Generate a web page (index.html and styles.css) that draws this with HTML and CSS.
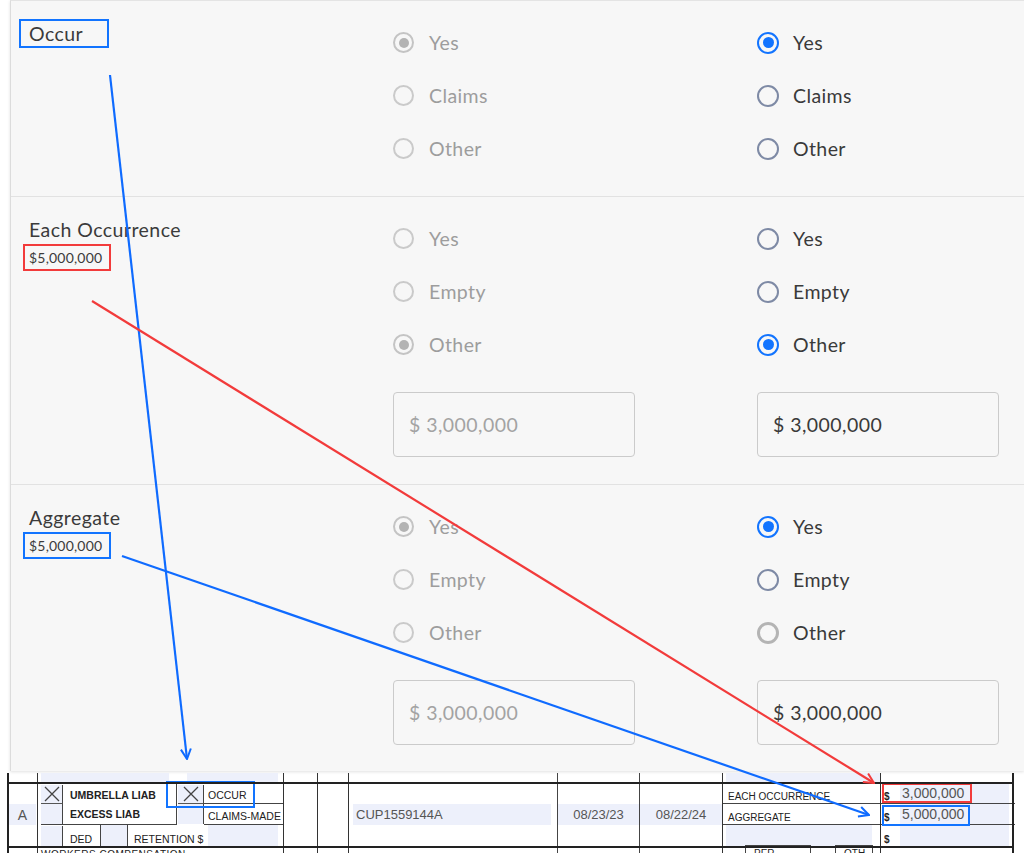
FILE: index.html
```html
<!DOCTYPE html>
<html lang="en">
<head>
  <meta charset="UTF-8" />
  <title>Umbrella coverage review</title>
  <link rel="stylesheet" href="styles.css">
</head>
<body>
<div class="page">

  <div class="panel">
    <section class="field">
      <div class="field-label">
        <div class="field-name"><span class="mark mark-blue name-mark">Occur</span></div>
      </div>
      <div class="choices muted">
        <div class="opt"><span class="dot on"></span>Yes</div>
        <div class="opt"><span class="dot"></span>Claims</div>
        <div class="opt"><span class="dot"></span>Other</div>
      </div>
      <div class="choices">
        <div class="opt"><span class="dot on"></span>Yes</div>
        <div class="opt"><span class="dot"></span>Claims</div>
        <div class="opt"><span class="dot"></span>Other</div>
      </div>
    </section>

    <section class="field has-amount">
      <div class="field-label">
        <div class="field-name">Each Occurrence</div>
        <div class="field-value"><span class="mark mark-red">$5,000,000</span></div>
      </div>
      <div class="choices muted">
        <div class="opt"><span class="dot"></span>Yes</div>
        <div class="opt"><span class="dot"></span>Empty</div>
        <div class="opt"><span class="dot on"></span>Other</div>
        <div class="amount">$ 3,000,000</div>
      </div>
      <div class="choices">
        <div class="opt"><span class="dot"></span>Yes</div>
        <div class="opt"><span class="dot"></span>Empty</div>
        <div class="opt"><span class="dot on"></span>Other</div>
        <div class="amount">$ 3,000,000</div>
      </div>
    </section>

    <section class="field has-amount">
      <div class="field-label">
        <div class="field-name">Aggregate</div>
        <div class="field-value"><span class="mark mark-blue">$5,000,000</span></div>
      </div>
      <div class="choices muted">
        <div class="opt"><span class="dot on"></span>Yes</div>
        <div class="opt"><span class="dot"></span>Empty</div>
        <div class="opt"><span class="dot"></span>Other</div>
        <div class="amount">$ 3,000,000</div>
      </div>
      <div class="choices">
        <div class="opt"><span class="dot on"></span>Yes</div>
        <div class="opt"><span class="dot"></span>Empty</div>
        <div class="opt"><span class="dot hover"></span>Other</div>
        <div class="amount">$ 3,000,000</div>
      </div>
    </section>
  </div>

  <!-- piece of the certificate the values came from -->
  <div class="acord">
    <div class="strip-a fill"></div>
    <div class="strip-b fill"></div>
    <div class="strip-c fill"></div>

    <div class="ltr fill">A</div>

    <div class="chk chk-1 fill">
      <svg viewBox="0 0 20 16"><path d="M3 1 L17 15 M17 1 L3 15" /></svg>
    </div>
    <div class="chk-blank chk-1b fill"></div>
    <div class="chk-blank chk-1c fill"></div>

    <div class="kind kind-1">UMBRELLA LIAB</div>
    <div class="kind kind-2">EXCESS LIAB</div>

    <div class="chk chk-2 fill">
      <svg viewBox="0 0 20 16"><path d="M3 1 L17 15 M17 1 L3 15" /></svg>
    </div>
    <div class="chk-blank chk-2b fill"></div>

    <div class="basis basis-1">OCCUR</div>
    <div class="basis basis-2">CLAIMS-MADE</div>

    <div class="ded">
      <span class="ded-lbl">DED</span>
      <span class="ded-box fill"></span>
      <span class="ret-lbl">RETENTION $</span>
      <span class="ret-box fill"></span>
    </div>

    <div class="policy fill">CUP1559144A</div>
    <div class="date date-eff fill">08/23/23</div>
    <div class="date date-exp fill">08/22/24</div>

    <div class="limit limit-1">EACH OCCURRENCE</div>
    <div class="limit limit-2">AGGREGATE</div>
    <div class="limit-3 fill"></div>

    <div class="amt amt-1"><b>$</b><span class="fill">3,000,000</span></div>
    <div class="amt amt-2"><b>$</b><span class="fill">5,000,000</span></div>
    <div class="amt amt-3"><b>$</b><span class="fill"></span></div>

    <div class="workers">WORKERS COMPENSATION</div>
    <div class="per-oth"><span>PER</span><span>OTH-</span></div>

    <span class="note note-occur"></span>
    <span class="note note-each"></span>
    <span class="note note-agg"></span>
  </div>

  <svg class="arrows" width="1024" height="853" viewBox="0 0 1024 853">
    <defs>
      <marker id="head-blue" viewBox="0 0 12 12" refX="11" refY="6" markerWidth="12" markerHeight="12" markerUnits="userSpaceOnUse" orient="auto">
        <path d="M1 1 L11 6 L1 11" fill="none" stroke="#0f6bff" stroke-width="2" />
      </marker>
      <marker id="head-red" viewBox="0 0 12 12" refX="11" refY="6" markerWidth="12" markerHeight="12" markerUnits="userSpaceOnUse" orient="auto">
        <path d="M1 1 L11 6 L1 11" fill="none" stroke="#f23b3b" stroke-width="2" />
      </marker>
    </defs>
    <line x1="110" y1="75" x2="187" y2="759" stroke="#0f6bff" stroke-width="2.2" marker-end="url(#head-blue)" />
    <line x1="92" y1="301" x2="874" y2="783" stroke="#f23b3b" stroke-width="2.2" marker-end="url(#head-red)" />
    <line x1="122" y1="556" x2="869" y2="815" stroke="#0f6bff" stroke-width="2.2" marker-end="url(#head-blue)" />
  </svg>

</div>
</body>
</html>
```

FILE: styles.css
```css
body {
  margin: 0;
  background: #fff;
  font-family: Lato, 'Open Sans', sans-serif;
  color: #3b3b3b;
}

.page {
  position: relative;
  width: 1024px;
  height: 853px;
  overflow: hidden;
}

/* review panel */

.panel {
  margin-left: 10px;
  background: #f7f7f7;
  border-left: 1px solid #dcdcdc;
  border-top: 1px solid #e4e4e4;
  box-shadow: 0 1px 3px rgba(0, 0, 0, 0.12);
}

.field {
  display: grid;
  grid-template-columns: 382px 364px 1fr;
  padding: 15px 0 21px;
  border-bottom: 1px solid #e2e2e2;
}

.field.has-amount {
  padding-bottom: 27px;
}

.field:last-child {
  border-bottom: none;
  padding-bottom: 26px;
}

.field-label {
  padding-left: 18px;
}

.field-name {
  margin-top: 6px;
  font-size: 19.5px;
  letter-spacing: 0.45px;
  line-height: 24px;
}

.field-value {
  margin-top: 6px;
  font-size: 14px;
  letter-spacing: 0.2px;
  line-height: 20px;
}

.mark {
  border: 2px solid;
  padding: 3px 7px 3px 4px;
  margin-left: -6px;
}

.mark-blue { border-color: #1274ff; }
.mark-red { border-color: #f23b3b; }

.name-mark {
  padding: 1px 24px 1px 8px;
  margin-left: -10px;
}

.opt {
  display: flex;
  align-items: center;
  gap: 14px;
  height: 53px;
  font-size: 19.5px;
  letter-spacing: 0.4px;
  color: #3a3a3a;
}

.dot {
  width: 22px;
  height: 22px;
  box-sizing: border-box;
  border: 2px solid #7e8aa5;
  border-radius: 50%;
  display: grid;
  place-items: center;
}

.dot.on {
  border: 2.5px solid #1274ff;
}

.dot.on::after {
  content: '';
  width: 11px;
  height: 11px;
  border-radius: 50%;
  background: #1274ff;
}

.dot.hover {
  border: 3.5px solid #b4b4b4;
}

.muted .opt { color: #9d9d9d; gap: 15px; }
.muted .dot { border-color: #cacaca; width: 21px; height: 21px; }
.muted .dot.on { border: 2px solid #c4c4c4; }
.muted .dot.on::after { background: #b3b3b3; width: 10px; height: 10px; }

.amount {
  margin-top: 21px;
  width: 242px;
  height: 65px;
  box-sizing: border-box;
  border: 1px solid #cbcbcb;
  border-radius: 4px;
  padding-left: 15px;
  display: flex;
  align-items: center;
  font-size: 19.5px;
  letter-spacing: 0.45px;
  color: #3a3a3a;
}

.muted .amount { color: #a3a3a3; }

/* certificate excerpt */

.acord {
  position: relative;
  margin: 2px 0 0 7px;
  width: 1008px;
  height: 82px;
  display: grid;
  grid-template-columns: 30px 26px 114px 27px 79px 34px 31px 209px 82px 83px 158px 135px;
  grid-template-rows: 9px 22px 21px 21px 9px;
  font-family: 'Liberation Sans', Arial, sans-serif;
  color: #222;
}

.acord::after {
  content: '';
  position: absolute;
  inset: 0;
  pointer-events: none;
  background:
    linear-gradient(#222, #222) 0 0 / 2px 100% no-repeat,
    linear-gradient(#222, #222) 1005px 0 / 2px 100% no-repeat,
    linear-gradient(#222, #222) 0 9px / 1007px 2px no-repeat,
    linear-gradient(#222, #222) 0 73px / 1007px 2px no-repeat,
    linear-gradient(#333, #333) 30px 0 / 1px 100% no-repeat,
    linear-gradient(#333, #333) 276px 0 / 1px 100% no-repeat,
    linear-gradient(#333, #333) 310px 0 / 1px 100% no-repeat,
    linear-gradient(#333, #333) 341px 0 / 1px 100% no-repeat,
    linear-gradient(#444, #444) 550px 0 / 1px 100% no-repeat,
    linear-gradient(#444, #444) 632px 0 / 1px 100% no-repeat,
    linear-gradient(#333, #333) 715px 0 / 1px 100% no-repeat,
    linear-gradient(#333, #333) 873px 0 / 1px 100% no-repeat;
}

.fill { background: #edf0fb; }

.strip-a { grid-column: 2 / 4; grid-row: 1; margin: 0 8px 0 4px; }
.strip-b { grid-column: 4 / 6; grid-row: 1; margin: 0 5px 0 10px; }
.strip-c { grid-column: 11; grid-row: 1; margin-left: 4px; }

.ltr {
  grid-column: 1;
  grid-row: 3;
  margin: 0 1px 0 2px;
  display: flex;
  align-items: center;
  justify-content: center;
  font-size: 14px;
  color: #555;
}

.chk {
  display: flex;
  align-items: center;
  justify-content: center;
  border-bottom: 1px solid #555;
  border-right: 1px solid #444;
  margin: 3px 0 0 4px;
}

.chk svg {
  width: 20px;
  height: 16px;
}

.chk path {
  stroke: #444;
  stroke-width: 1.3;
  fill: none;
}

.chk-1 { grid-column: 2; grid-row: 2; }
.chk-2 { grid-column: 4; grid-row: 2; margin-left: 1px; }

.chk-blank {
  border-right: 1px solid #444;
  margin-left: 4px;
}

.chk-1b { grid-column: 2; grid-row: 3; border-bottom: 1px solid #444; }
.chk-1c { grid-column: 2; grid-row: 4; margin-top: 1px; }
.chk-2b { grid-column: 4; grid-row: 3; margin-left: 1px; margin-bottom: 1px; }

.kind {
  font-size: 10.5px;
  font-weight: bold;
  padding-left: 7px;
  display: flex;
  align-items: center;
  border-right: 1px solid #444;
}

.kind-1 { grid-column: 3; grid-row: 2; align-items: flex-end; padding-bottom: 3px; }
.kind-2 { grid-column: 3; grid-row: 3; border-bottom: 1px solid #444; }

.basis {
  font-size: 10.5px;
  padding-left: 4px;
  display: flex;
  align-items: flex-end;
  padding-bottom: 2px;
}

.basis-1 { grid-column: 5; grid-row: 2; border-bottom: 1px solid #444; }
.basis-2 { grid-column: 5; grid-row: 3; border-bottom: 1px solid #444; }

.ded {
  grid-column: 3 / 6;
  grid-row: 4;
  display: flex;
  font-size: 10.5px;
  align-items: stretch;
}

.ded span {
  display: flex;
  align-items: flex-end;
  padding-bottom: 1px;
}

.ded-lbl { width: 30px; padding-left: 7px; border-right: 1px solid #444; }
.ded-box { width: 26px; border-right: 1px solid #444; }
.ret-lbl { width: 74px; padding-left: 6px; }
.ret-box { flex: 1; margin-right: 5px; }

.policy {
  grid-column: 8;
  grid-row: 3;
  margin: 0 6px 0 5px;
  padding-left: 3px;
  display: flex;
  align-items: center;
  font-size: 13px;
  color: #555;
}

.date {
  grid-row: 3;
  display: flex;
  align-items: center;
  justify-content: center;
  font-size: 13px;
  color: #555;
  margin-left: 1px;
}

.date-eff { grid-column: 9; }
.date-exp { grid-column: 10; }

.limit {
  font-size: 10px;
  padding-left: 6px;
  display: flex;
  align-items: flex-end;
  padding-bottom: 1px;
  border-bottom: 1px solid #444;
}

.limit-1 { grid-column: 11; grid-row: 2; }
.limit-2 { grid-column: 11; grid-row: 3; }
.limit-3 { grid-column: 11; grid-row: 4; margin: 0 8px 0 4px; }

.amt {
  display: flex;
  align-items: stretch;
  border-bottom: 1px solid #444;
  margin-left: 1px;
}

.amt b {
  font-size: 10px;
  width: 16px;
  padding-left: 3px;
  display: flex;
  align-items: flex-end;
  padding-bottom: 1px;
}

.amt span {
  flex: 1;
  font-size: 14px;
  color: #555;
  display: flex;
  align-items: center;
  padding-left: 2px;
  margin-right: 6px;
}

.amt-1 { grid-column: 12; grid-row: 2; }
.amt-2 { grid-column: 12; grid-row: 3; }
.amt-3 { grid-column: 12; grid-row: 4; border-bottom: none; }

.workers {
  grid-column: 2 / 6;
  grid-row: 5;
  font-size: 10px;
  padding: 3px 0 0 4px;
  white-space: nowrap;
  letter-spacing: 0.5px;
}

.per-oth {
  grid-column: 11;
  grid-row: 5;
  display: flex;
  gap: 24px;
  padding-left: 23px;
  font-size: 10px;
}

.per-oth span {
  border: 1px solid #444;
  width: 56px;
  padding: 2px 0 0 8px;
  margin-top: -1px;
}

.per-oth span + span {
  width: 28px;
}

/* review highlights drawn on the excerpt */

.note {
  position: absolute;
  border: 2px solid #1274ff;
  pointer-events: none;
}

.note-occur { left: 159px; top: 8px; width: 85px; height: 23px; }
.note-each { left: 875px; top: 10px; width: 86px; height: 16px; border-color: #f23b3b; }
.note-agg { left: 875px; top: 32px; width: 84px; height: 17px; }

.arrows {
  position: absolute;
  top: 0;
  left: 0;
  pointer-events: none;
}
```
